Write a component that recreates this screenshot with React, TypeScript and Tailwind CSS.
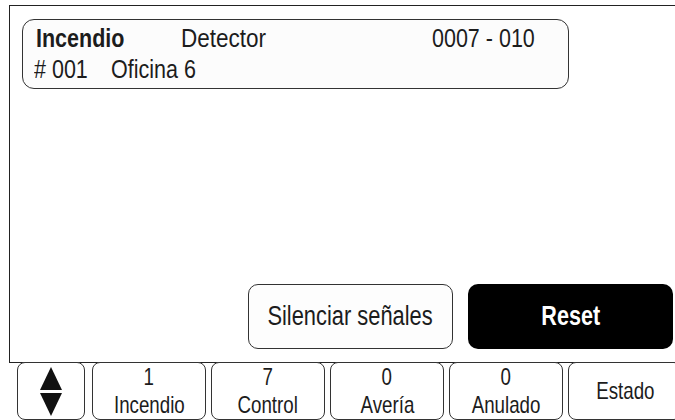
import React from 'react'

const tabs = [
  { count: '1', label: 'Incendio' },
  { count: '7', label: 'Control' },
  { count: '0', label: 'Avería' },
  { count: '0', label: 'Anulado' },
]

// condensed face is not installed, so squeeze Liberation Sans horizontally
const Narrow = ({ children, className = '' }: { children: React.ReactNode; className?: string }) => (
  <span className={`inline-block whitespace-nowrap ${className}`}>{children}</span>
)

const ArrowsIcon = () => (
  <svg width="22" height="49" viewBox="0 0 22 49" className="block">
    <polygon points="11,0 22,23 0,23" fill="#111" />
    <polygon points="0,26 22,26 11,49" fill="#111" />
  </svg>
)

export default function App() {
  return (
    <div className="w-[675px] h-[420px] bg-white overflow-hidden font-['Liberation_Sans',Arial,sans-serif] text-[#1c1c1c]">
      {/* Main panel */}
      <div className="ml-[9px] mt-[5px] h-[358px] border-l border-t border-b border-[#222] flex flex-col">
        {/* Event card */}
        <div className="mt-[13px] ml-[12px] w-[547px] h-[70px] rounded-[12px] border border-[#333] bg-[#fcfcfc] pt-[3px] text-[25px] leading-[31px]">
          <div className="flex pl-[13px]">
            <div className="w-[145px]">
              <Narrow className="font-bold scale-x-[0.86] origin-left">Incendio</Narrow>
            </div>
            <div className="w-[251px]">
              <Narrow className="scale-x-[0.9] origin-left">Detector</Narrow>
            </div>
            <Narrow className="scale-x-[0.86] origin-left">0007 - 010</Narrow>
          </div>
          <div className="flex pl-[11px]">
            <div className="w-[77px]">
              <Narrow className="scale-x-[0.86] origin-left"># 001</Narrow>
            </div>
            <Narrow className="scale-x-[0.86] origin-left">Oficina 6</Narrow>
          </div>
        </div>

        <div className="flex-1" />

        {/* Action buttons */}
        <div className="flex justify-end gap-[15px] pr-[2px] pb-[13px] text-[27px]">
          <button className="w-[205px] h-[65px] rounded-[10px] border border-[#333] bg-[#fdfdfd] flex items-center justify-center">
            <Narrow className="scale-x-[0.81]">Silenciar señales</Narrow>
          </button>
          <button className="w-[205px] h-[65px] rounded-[10px] bg-black text-white font-bold flex items-center justify-center">
            <Narrow className="scale-x-[0.8]">Reset</Narrow>
          </button>
        </div>
      </div>

      {/* Bottom tabs */}
      <div className="flex gap-[5px] pl-[17px] -mt-[1px] text-[24px] leading-[28px]">
        <div className="w-[68px] mr-[2px] h-[58px] shrink-0 rounded-[8px] border border-[#333] bg-white flex items-center justify-center">
          <ArrowsIcon />
        </div>
        {tabs.map((tab, i) => (
          <div
            key={i}
            className="w-[114px] h-[58px] shrink-0 rounded-[8px] border border-[#333] bg-white flex flex-col items-center justify-center"
          >
            <Narrow className="scale-x-[0.78]">{tab.count}</Narrow>
            <Narrow className="scale-x-[0.78]">{tab.label}</Narrow>
          </div>
        ))}
        <div className="w-[114px] h-[58px] shrink-0 rounded-[8px] border border-[#333] bg-white flex items-center justify-center">
          <Narrow className="scale-x-[0.78]">Estado</Narrow>
        </div>
      </div>
    </div>
  )
}
